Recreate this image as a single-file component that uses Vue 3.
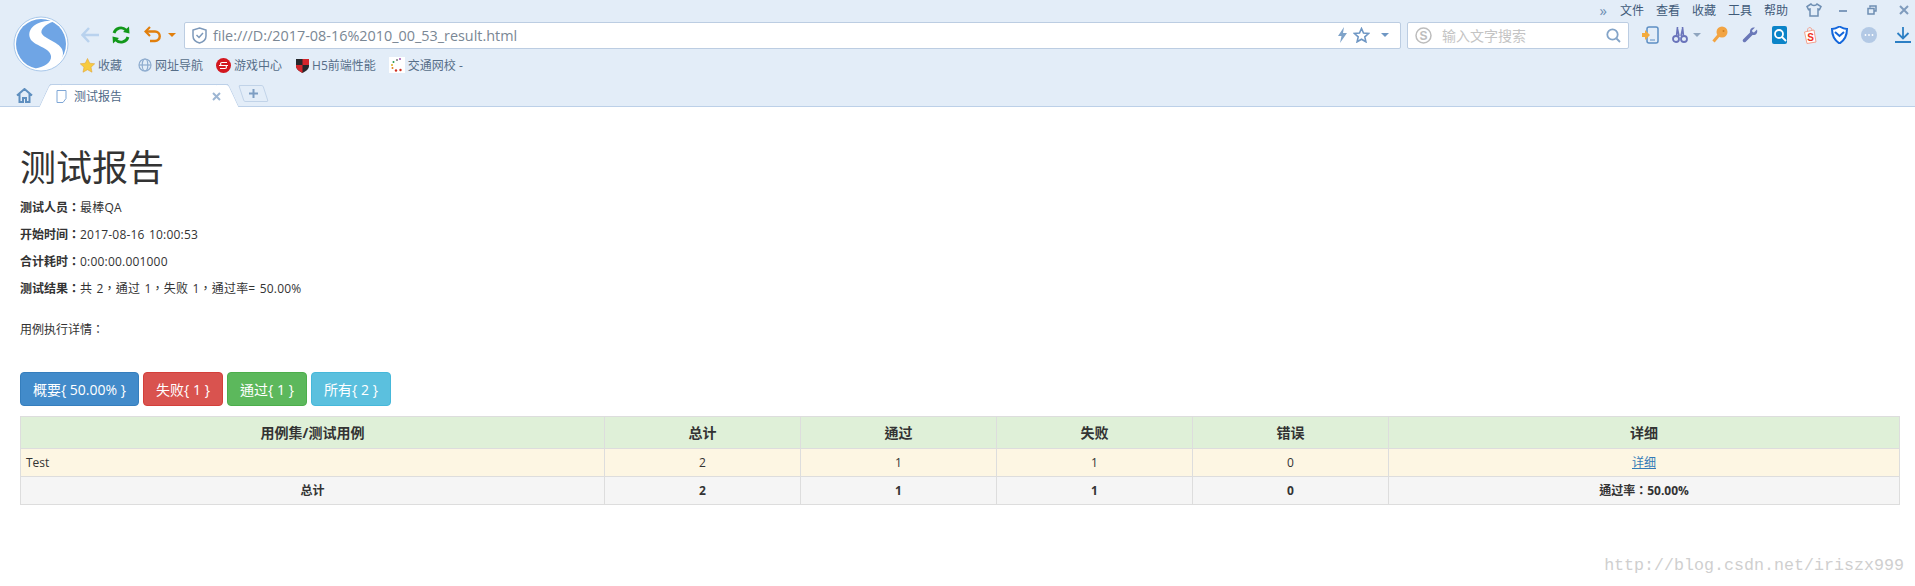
<template>
  <div class="page">
    <!-- 浏览器外壳 -->
    <header class="chrome">
      <div class="menu-row">
        <span class="more">»</span>
        <span v-for="m in menus" :key="m" class="menu-item">{{ m }}</span>
        <svg class="win shirt" width="16" height="14" viewBox="0 0 16 14"><path d="M5 1 1 3.5 2.5 6.5 4 6v7h8V6l1.5.5L15 3.5 11 1C10 3 6 3 5 1Z" fill="none" stroke="#6f8fb3" stroke-width="1.5"/></svg>
        <svg class="win" width="10" height="10" viewBox="0 0 10 10"><path d="M1 6h8" stroke="#7f9bbd" stroke-width="2"/></svg>
        <svg class="win restore" width="10" height="10" viewBox="0 0 10 10"><path d="M3 2.5V1h6v5H7.500M1 3.500h6V9H1Z" fill="none" stroke="#6f8fb3" stroke-width="1.5"/></svg>
        <svg class="win close" width="10" height="10" viewBox="0 0 10 10"><path d="m1 1 8 8M9 1 1 9" stroke="#7f9bbd" stroke-width="2"/></svg>
      </div>

      <div class="head-main">
        <svg class="logo" width="56" height="56" viewBox="0 0 56 56">
          <circle cx="28" cy="28" r="27" fill="#fff" stroke="#a9c8ea"/>
          <circle cx="28" cy="28" r="25" fill="#6fa5e5"/>
          <path d="M41 5.500C28 3 13 11 17 22c3 8 20 9 21 18 .7 6-6 11-16 12.500C32 56 50 50 50 37c0-10-17-13-21-19-2.500-4 3-10 12-12.500Z" fill="#fff"/>
        </svg>
        <div class="head-right">
          <div class="toolbar">
            <svg class="nav-back" width="18" height="16" viewBox="0 0 18 16"><path d="M8 1 1.500 8 8 15M2 8h16" fill="none" stroke="#b9d2ee" stroke-width="2.500"/></svg>
            <svg class="nav-refresh" width="20" height="20" viewBox="0 0 20 20"><path d="M3 8a7.200 7.200 0 0 1 12-3M17 12A7.200 7.200 0 0 1 5 15" fill="none" stroke="#12981a" stroke-width="2.800"/><path d="m12 7 6.500 1.500-.5-7ZM8 13l-6.500-1.500.5 7Z" fill="#12981a"/></svg>
            <svg class="nav-undo" width="18" height="18" viewBox="0 0 18 18"><path d="M6 1 1.500 5.500 6 10" fill="none" stroke="#e17f0c" stroke-width="2.200"/><path d="M2 5.500h9a4.700 4.700 0 0 1 0 9.500H6" fill="none" stroke="#e17f0c" stroke-width="2.400"/></svg>
            <i class="caret orange"></i>
            <div class="address">
              <svg width="15" height="17" viewBox="0 0 15 17"><path d="M7.500 1 14 3v6c0 3.500-3 6-6.500 7C4 15 1 12.500 1 9V3Z" fill="none" stroke="#7d99ba" stroke-width="1.5"/><path d="m4.500 8 2.500 2.500L11 6" fill="none" stroke="#7d99ba" stroke-width="1.5"/></svg>
              <span class="url">file:///D:/2017-08-16%2010_00_53_result.html</span>
              <svg width="9" height="16" viewBox="0 0 9 16"><path d="M6 0 0 9h3.500L2 16l7-10H5Z" fill="#7fa3c9"/></svg>
              <svg class="addr-star" width="17" height="16" viewBox="0 0 17 16"><path d="m8.500 1.500 2 4.500 5 .5-3.700 3.300 1.100 5-4.400-2.600-4.400 2.600 1.100-5L1.500 6.500l5-.5Z" fill="none" stroke="#6f97c4" stroke-width="1.600"/></svg>
              <i class="caret blue"></i>
            </div>
            <div class="search">
              <svg width="17" height="17" viewBox="0 0 17 17"><circle cx="8.500" cy="8.500" r="7.500" fill="none" stroke="#bdbdbd" stroke-width="1.5"/><text x="8.500" y="12.500" text-anchor="middle" class="sogou">S</text></svg>
              <span class="search-text">输入文字搜索</span>
              <svg width="15" height="15" viewBox="0 0 15 15"><circle cx="6.500" cy="6.500" r="5.200" fill="none" stroke="#83a4c8" stroke-width="1.800"/><path d="m10.500 10.500 3.500 3.500" stroke="#83a4c8" stroke-width="1.800"/></svg>
            </div>
            <div class="tools">
              <svg width="18" height="18" viewBox="0 0 18 18"><rect x="5" y="1" width="11" height="16" rx="2" fill="none" stroke="#5e8fc4" stroke-width="1.5"/><path d="M8 14h5" stroke="#5e8fc4"/><path d="M0 7h3V4l5 5-5 5v-3H0Z" fill="#f4ab3c"/></svg>
              <svg class="t-scissors" width="16" height="18" viewBox="0 0 16 18"><circle cx="4" cy="13" r="3" fill="none" stroke="#6a74bb" stroke-width="1.800"/><circle cx="12" cy="13" r="3" fill="none" stroke="#6a74bb" stroke-width="1.800"/><path d="M4.500 10 5.500 1M11.500 10 10.500 1M5.500 3l1.500 7M10.500 3 9 10" stroke="#6a74bb" stroke-width="1.600" fill="none"/></svg>
              <i class="caret gray"></i>
              <svg class="t-key" width="16" height="18" viewBox="0 0 16 18"><circle cx="10" cy="6" r="5.500" fill="#f2a443"/><circle cx="11.500" cy="5" r="1" fill="#cf7d20"/><path d="M7 9 1.500 15.500" stroke="#f2a443" stroke-width="3"/></svg>
              <svg class="t-wrench" width="16" height="16" viewBox="0 0 16 16"><path d="M15 2.500 12 5.500 10.500 5 10 3.500l3-3C10 0 7.500 2 8 5.500L1 12.500a1.800 1.800 0 0 0 2.500 2.500L10.500 8c3.500.5 5.500-2 4.500-5.500Z" fill="#6a78b8"/></svg>
              <svg class="t-find" width="15" height="18" viewBox="0 0 15 18"><rect width="15" height="18" rx="2" fill="#0c84c8"/><circle cx="7" cy="8" r="4" fill="none" stroke="#fff" stroke-width="1.800"/><path d="m10 11 4 4" stroke="#fff" stroke-width="1.800"/></svg>
              <svg class="t-bag" width="14" height="18" viewBox="0 0 14 18"><path d="M1.500 6 11 4l2 12-9 1.500Z" fill="#fff" stroke="#f4a08e"/><path d="M4.500 5.500c-.5-5 4-5 4.500-1.500" fill="none" stroke="#f4a08e"/><text x="7.500" y="14.500" text-anchor="middle" class="bag-s">S</text></svg>
              <svg class="t-shield" width="17" height="18" viewBox="0 0 17 18"><path d="M1 3c3 0 5-1 7.500-2.500C11 2 13 3 16 3c0 7-2 11-7.500 14.500C3 14 1 10 1 3Z" fill="#fff" stroke="#1467dc" stroke-width="2"/><path d="m4 6 4.500 4L13 6" fill="none" stroke="#1467dc" stroke-width="2"/></svg>
              <svg class="t-dots" width="16" height="16" viewBox="0 0 16 16"><circle cx="8" cy="8" r="8" fill="#b3c9e5"/><circle cx="4.500" cy="8" r=".9" fill="#fff"/><circle cx="8" cy="8" r=".9" fill="#fff"/><circle cx="11.500" cy="8" r=".9" fill="#fff"/></svg>
              <svg class="t-down" width="16" height="16" viewBox="0 0 16 16"><path d="M8 0v11M2.500 6 8 11.500 13.500 6M0 15h16" fill="none" stroke="#2c7fc4" stroke-width="1.800"/></svg>
            </div>
          </div>

          <div class="bookmarks">
            <span class="bm">
              <svg width="15" height="15" viewBox="0 0 15 15"><path d="m7.500 .5 2.200 4.700 5 .6-3.700 3.400 1 5-4.500-2.500L3 14.200l1-5L.3 5.800l5-.6Z" fill="#f7cb3f" stroke="#e2a63a" stroke-width=".6"/></svg>
              收藏
            </span>
            <span class="bm">
              <svg width="14" height="14" viewBox="0 0 14 14"><g fill="none" stroke="#8eaccf" stroke-width="1.200"><circle cx="7" cy="7" r="6"/><ellipse cx="7" cy="7" rx="2.800" ry="6"/><path d="M1 7h12"/></g></svg>
              网址导航
            </span>
            <span class="bm">
              <svg width="15" height="15" viewBox="0 0 15 15"><circle cx="7.500" cy="7.500" r="7.500" fill="#d3171f"/><path d="M11 4.500H6c-2 0-2 3 0 3h3c2 0 2 3 0 3H4M3 7.500h9" fill="none" stroke="#fff" stroke-width="1.100"/></svg>
              游戏中心
            </span>
            <span class="bm">
              <svg width="13" height="15" viewBox="0 0 13 15"><path d="M0 1h13v7c0 3-3 5-6.500 7C3 13 0 11 0 8Z" fill="#26272b"/><path d="M6.500 1H13v6H6.500ZM0 7h6.500v8C3 13 0 11 0 8Z" fill="#d4252b"/></svg>
              H5前端性能
            </span>
            <span class="bm">
              <svg width="16" height="16" viewBox="0 0 16 16"><rect width="16" height="16" fill="#fff"/><circle cx="8" cy="3" r="1" fill="#777"/><circle cx="11" cy="2" r="1" fill="#a050b0"/><circle cx="4.500" cy="5" r="1" fill="#2a9a4a"/><circle cx="3" cy="8" r="1" fill="#e0b020"/><circle cx="3.500" cy="11" r="1" fill="#e08020"/><circle cx="7" cy="13.500" r="1.200" fill="#d03020"/><circle cx="11.500" cy="13" r="1.200" fill="#d03020"/></svg>
              交通网校 -
            </span>
          </div>
        </div>
      </div>

      <div class="tab-row">
        <svg class="home" width="17" height="15" viewBox="0 0 17 15"><path d="M1 7.500 8.500 1 16 7.500M3.500 6v8h3.500v-4h3v4h3.500V6" fill="none" stroke="#5f8fbf" stroke-width="2"/></svg>
        <div class="tab">
          <svg width="11" height="13" viewBox="0 0 11 13"><path d="M1 .5h9v8L7 12.500H1Z" fill="#fff" stroke="#7fa7d6"/></svg>
          <span class="tab-title">测试报告</span>
          <svg width="9" height="9" viewBox="0 0 9 9"><path d="m1 1 7 7M8 1 1 8" stroke="#9db6d3" stroke-width="2"/></svg>
        </div>
        <div class="new-tab">
          <svg width="9" height="9" viewBox="0 0 9 9"><path d="M4.500 0v9M0 4.500h9" stroke="#7d9dc2" stroke-width="2"/></svg>
        </div>
      </div>
    </header>

    <!-- 报告内容 -->
    <main class="report">
      <h1>测试报告</h1>
      <p v-for="item in summary" :key="item.label"><strong>{{ item.label }}：</strong><span class="val">{{ item.value }}</span></p>
      <p class="case-title">用例执行详情：</p>

      <div class="btns">
        <button v-for="b in buttons" :key="b.text" :class="['btn', b.type]">{{ b.text }}</button>
      </div>

      <table>
        <colgroup>
          <col v-for="(w, i) in colWidths" :key="i" :style="{ width: w + 'px' }">
        </colgroup>
        <thead>
          <tr>
            <th v-for="h in heads" :key="h">{{ h }}</th>
          </tr>
        </thead>
        <tbody>
          <tr class="row-warn">
            <td class="left">Test</td>
            <td>2</td>
            <td>1</td>
            <td>1</td>
            <td>0</td>
            <td><a href="#">详细</a></td>
          </tr>
          <tr class="row-total">
            <td>总计</td>
            <td>2</td>
            <td>1</td>
            <td>1</td>
            <td>0</td>
            <td>通过率：50.00%</td>
          </tr>
        </tbody>
      </table>
    </main>

    <div class="watermark">http://blog.csdn.net/iriszx999</div>
  </div>
</template>

<script setup>
const menus = ['文件', '查看', '收藏', '工具', '帮助']

const summary = [
  { label: '测试人员', value: '最棒QA' },
  { label: '开始时间', value: '2017-08-16 10:00:53' },
  { label: '合计耗时', value: '0:00:00.001000' },
  { label: '测试结果', value: '共 2，通过 1，失败 1，通过率= 50.00%' }
]

const buttons = [
  { text: '概要{ 50.00% }', type: 'primary' },
  { text: '失败{ 1 }', type: 'danger' },
  { text: '通过{ 1 }', type: 'success' },
  { text: '所有{ 2 }', type: 'info' }
]

const heads = ['用例集/测试用例', '总计', '通过', '失败', '错误', '详细']
const colWidths = [584, 196, 196, 196, 196, 511]
</script>

<style>
html,
body {
  margin: 0;
  background: #fff;
  overflow: hidden;
}
</style>

<style scoped>
.page {
  position: relative;
  width: 1915px;
  height: 586px;
  overflow: hidden;
  font-family: "Open Sans", "Noto Sans CJK SC", sans-serif;
  font-size: 12px;
  color: #333;
}

.chrome {
  display: flex;
  flex-direction: column;
  height: 107px;
  box-sizing: border-box;
  background: #e3edf8;
  border-bottom: 1px solid #bcd0e8;
  color: #566e88;
}

.menu-row {
  display: flex;
  align-items: center;
  justify-content: flex-end;
  height: 20px;
  padding-right: 6px;
  color: #3f5a78;
}
.more {
  margin-right: 13px;
  font-size: 15px;
  color: #6f8fb3;
}
.menu-item {
  margin-right: 12px;
}
.win {
  margin-left: 16px;
}
.shirt {
  margin-left: 6px;
}
.restore {
  margin-left: 19px;
}
.close {
  margin-left: 22px;
}

.head-main {
  display: flex;
  height: 60px;
  margin-top: -4px;
}
.logo {
  flex: none;
  margin: 0 11px 0 13px;
}
.head-right {
  flex: 1;
  min-width: 0;
}

.toolbar {
  display: flex;
  align-items: center;
  height: 28px;
  margin-top: 5px;
}
.toolbar > *,
.tools > * {
  flex: none;
}
.nav-back {
  margin-left: 1px;
}
.nav-refresh {
  margin-left: 12px;
}
.nav-undo {
  margin-left: 13px;
}
.caret {
  display: block;
  width: 0;
  height: 0;
  border-left: 4px solid transparent;
  border-right: 4px solid transparent;
  border-top: 4px solid #6f97c4;
}
.caret.orange {
  margin: 0 8px 0 6px;
  border-top-color: #e17f0c;
}
.caret.gray {
  margin-left: 5px;
  border-top-color: #8fa5bf;
}

.address {
  display: flex;
  align-items: center;
  width: 1217px;
  height: 27px;
  box-sizing: border-box;
  padding: 0 11px 0 7px;
  margin-right: 6px;
  background: #fff;
  border: 1px solid #bccde2;
  border-radius: 2px;
}
.url {
  flex: 1;
  margin-left: 6px;
  font-size: 14.4px;
  color: #7a8794;
}
.addr-star {
  margin: 0 11px 0 6px;
}

.search {
  display: flex;
  align-items: center;
  width: 222px;
  height: 27px;
  box-sizing: border-box;
  padding: 0 7px;
  background: #fff;
  border: 1px solid #bccde2;
  border-radius: 2px;
}
.search-text {
  flex: 1;
  margin-left: 10px;
  font-size: 14px;
  color: #c4c4c4;
}
.sogou {
  font: bold 12px "Liberation Sans", sans-serif;
  fill: #bdbdbd;
}

.tools {
  display: flex;
  align-items: center;
  margin-left: 13px;
}
.t-scissors {
  margin-left: 12px;
}
.t-key {
  margin-left: 11px;
}
.t-wrench,
.t-find,
.t-shield {
  margin-left: 14px;
}
.t-bag {
  margin-left: 16px;
}
.t-dots {
  margin-left: 13px;
}
.t-down {
  margin-left: 18px;
}
.bag-s {
  font: bold 10px "Liberation Sans", sans-serif;
  fill: #ee2f22;
}

.bookmarks {
  display: flex;
  align-items: center;
  height: 20px;
  margin-top: 6px;
  gap: 14px;
}
.bm {
  display: flex;
  align-items: center;
  gap: 3px;
}
.bm:nth-child(2) {
  margin-left: 2px;
}
.bm:nth-child(3),
.bm:nth-child(5) {
  margin-left: -1px;
}

.tab-row {
  display: flex;
  align-items: flex-end;
  flex: 1;
  min-height: 0;
  padding-left: 16px;
}
.home {
  margin-bottom: 3px;
}
.tab {
  position: relative;
  isolation: isolate;
  display: flex;
  align-items: center;
  width: 178px;
  height: 23px;
  box-sizing: border-box;
  margin-left: 17px;
  margin-bottom: -1px;
  padding: 0 7px 0 6px;
  background: #fff;
  border-top: 1px solid #bcd0e8;
}
.tab::before,
.tab::after {
  content: "";
  position: absolute;
  top: -1px;
  bottom: 0;
  z-index: -1;
  width: 12px;
  background: #fff;
  border-top: 1px solid #bcd0e8;
}
.tab::before {
  left: -6px;
  border-left: 1px solid #bcd0e8;
  border-radius: 3px 0 0 0;
  transform: skewX(-25deg);
}
.tab::after {
  right: -6px;
  border-right: 1px solid #bcd0e8;
  border-radius: 0 3px 0 0;
  transform: skewX(25deg);
}
.tab-title {
  flex: 1;
  margin-left: 7px;
  color: #4f6a88;
}
.new-tab {
  position: relative;
  display: flex;
  align-items: center;
  justify-content: center;
  width: 25px;
  height: 17px;
  margin-left: 13px;
  margin-bottom: 4px;
}
.new-tab::before {
  content: "";
  position: absolute;
  inset: 0;
  border: 1px solid #c1d3e8;
  border-radius: 2px;
  transform: skewX(18deg);
}

.report {
  padding: 41px 15px 0 20px;
  font-family: "Open Sans", "Noto Sans CJK TC", sans-serif;
}
h1 {
  margin: 0 0 11px;
  font-family: "Open Sans", "Noto Sans CJK SC", sans-serif;
  font-size: 36px;
  font-weight: 400;
  line-height: 40px;
}
p {
  margin: 0 0 10px;
  line-height: 17px;
}
.val {
  letter-spacing: 0.2px;
  word-spacing: 1px;
}
.case-title {
  margin-top: 24px;
}

.btns {
  display: flex;
  gap: 4px;
  margin-top: 34px;
}
.btn {
  height: 34px;
  padding: 0;
  border: 1px solid;
  border-radius: 4px;
  font: inherit;
  font-size: 14px;
  color: #fff;
}
.primary {
  width: 119px;
  background: #428bca;
  border-color: #357ebd;
}
.danger {
  width: 80px;
  background: #d9534f;
  border-color: #d43f3a;
}
.success {
  width: 80px;
  background: #5cb85c;
  border-color: #4cae4c;
}
.info {
  width: 80px;
  background: #5bc0de;
  border-color: #46b8da;
}

table {
  width: 1879px;
  margin-top: 10px;
  border-collapse: collapse;
  table-layout: fixed;
}
th,
td {
  padding: 5px;
  border: 1px solid #ddd;
  line-height: 17px;
  text-align: center;
}
th {
  height: 32px;
  box-sizing: border-box;
  background: #dff0d8;
  font-size: 14px;
}
.row-warn td {
  background: #fdf6e3;
}
.row-warn .left {
  text-align: left;
}
.row-total td {
  background: #f5f5f5;
  font-weight: 700;
}
a {
  color: #337ab7;
}

.watermark {
  position: absolute;
  right: 11px;
  bottom: 11px;
  font-family: "Liberation Mono", monospace;
  font-size: 16.67px;
  color: #cfcfcf;
}
</style>
